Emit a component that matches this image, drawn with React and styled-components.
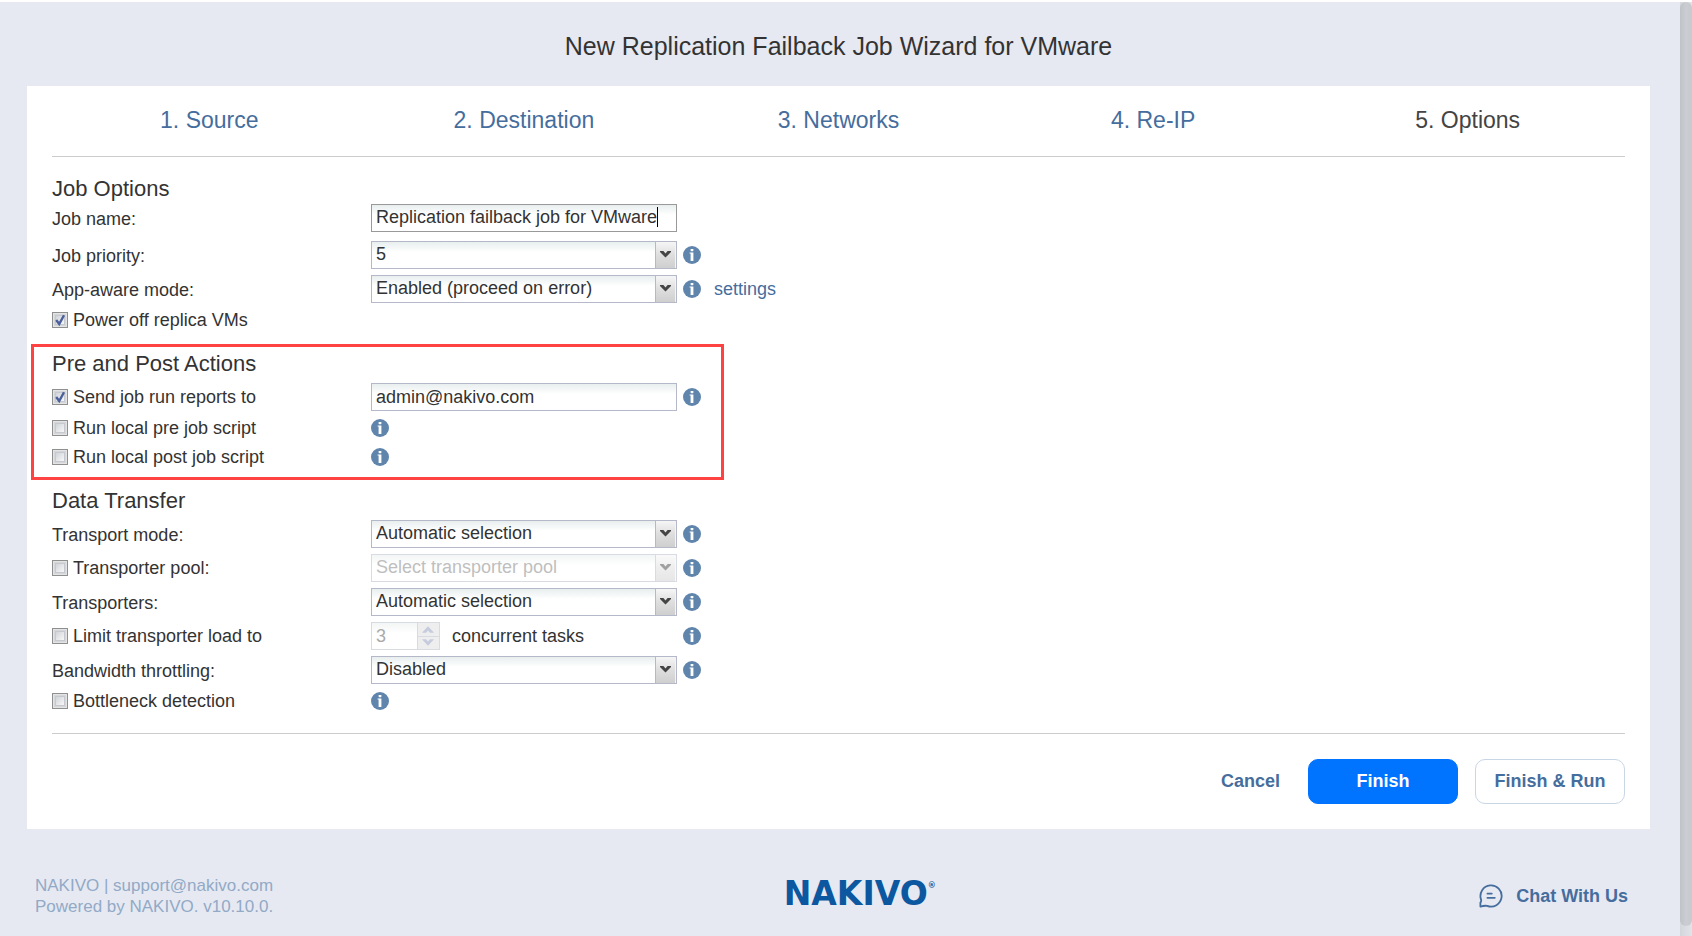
import { useState } from 'react';
import styled, { createGlobalStyle } from 'styled-components';

const GlobalStyle = createGlobalStyle`
  * {
    box-sizing: border-box;
  }
  body {
    margin: 0;
    color: #333;
    font-family: 'Liberation Sans', Arial, sans-serif;
    font-size: 18px;
    line-height: 22px;
    background: #e6e9f2;
  }
  button, input, select {
    font: inherit;
    color: inherit;
  }
`;

const Page = styled.div`
  display: flex;
  min-height: 100vh;
  border-top: 2px solid #fff;
`;

const Main = styled.main`
  flex: 1;
  display: flex;
  flex-direction: column;
`;

const ScrollTrack = styled.div`
  width: 12px;
  padding-bottom: 10px;
  display: flex;
  background: linear-gradient(to right, #d3d6db, #e0e3e8);
`;

const ScrollThumb = styled.div`
  flex: 1;
  border-radius: 6px;
  background: linear-gradient(to right, #bfc2c7, #cacdd2 50%, #c6c9ce);
`;

const Title = styled.h1`
  margin: 0;
  padding: 28px 30px 24px 27px;
  font-size: 25px;
  line-height: 32px;
  font-weight: normal;
  text-align: center;
`;

const Card = styled.div`
  margin: 0 30px 0 27px;
  padding: 0 25px 25px;
  background: #fff;
`;

const Steps = styled.nav`
  display: grid;
  grid-template-columns: repeat(5, 1fr);
  padding: 19px 0 21px;
  border-bottom: 1px solid #ccc;
  font-size: 23px;
  line-height: 30px;
  text-align: center;
`;

const Step = styled.a`
  color: ${(props) => (props.$current ? '#444' : '#456d9d')};
  text-decoration: none;
`;

const Section = styled.section`
  padding-top: ${(props) => props.$top}px;
`;

const Highlight = styled.section`
  width: 693px;
  margin: 9px 0 0 -21px;
  padding: 3px 18px 5px;
  border: 3px solid #ff4343;
`;

const Heading = styled.h2`
  margin: 0 0 ${(props) => (props.$tight ? 0 : 2)}px;
  font-size: 22px;
  line-height: ${(props) => (props.$tight ? 25 : 28)}px;
  font-weight: normal;
`;

const Row = styled.div`
  display: grid;
  grid-template-columns: 319px 306px auto;
  align-items: center;
  justify-content: start;
  height: ${(props) => (props.$compact ? 29 : 34)}px;
  padding-bottom: ${(props) => (props.$compact ? 2 : 0)}px;
  margin-bottom: ${(props) => (props.$spaced ? 3 : 0)}px;
`;

const Label = styled.label`
  padding-top: 2px;
`;

const CheckLabel = styled.label`
  display: flex;
  align-items: center;
  gap: 5px;
`;

const Checkbox = styled.input`
  appearance: none;
  flex: none;
  width: 16px;
  height: 16px;
  margin: 0;
  border: 1px solid #8e8f8f;
  box-shadow: inset 0 0 0 1px #e4e4e4, inset 0 0 0 2px #d4d6da,
    inset 0 0 0 3px #c6cad0;
  background: linear-gradient(135deg, #cfd3d8 20%, #f8f8f8 80%);
`;

const CheckBox = styled.span`
  position: relative;
  display: flex;
`;

const Tick = styled.svg`
  position: absolute;
  inset: 0;
  pointer-events: none;
`;

const Hint = styled.button`
  display: flex;
  width: 18px;
  height: 18px;
  padding: 0;
  border: 0;
  background: none;
`;

const Extras = styled.div`
  display: flex;
  align-items: center;
  padding-left: 6px;
  gap: 13px;
`;

const fieldLook = `
  height: 28px;
  border: 1px solid #b5b8c8;
  background: #fff linear-gradient(#e8eeee, #fff 10px);
`;

const TextBox = styled.input`
  ${fieldLook}
  width: 100%;
  padding: 0 4px;
  border-radius: 0;
  outline: none;
`;

const FocusedBox = styled.div`
  ${fieldLook}
  display: flex;
  align-items: center;
  padding: 0 4px 2px;
  border-color: #999;
`;

const GrowingInput = styled.input`
  field-sizing: content;
  height: 22px;
  padding: 0;
  border: 0;
  outline: none;
  background: none;
  caret-color: transparent;
`;

const Caret = styled.span`
  width: 1px;
  height: 20px;
  background: #000;
`;

const SelectBox = styled.div`
  position: relative;
  opacity: ${(props) => (props.$off ? 0.5 : 1)};
`;

const NativeSelect = styled.select`
  ${fieldLook}
  display: block;
  appearance: none;
  width: 100%;
  padding: 0 24px 2px 4px;
  border-radius: 0;
  opacity: 1;
  color: ${(props) => (props.disabled ? '#808080' : '#333')};
`;

const Trigger = styled.span`
  position: absolute;
  top: 1px;
  right: 1px;
  bottom: 1px;
  width: 21px;
  display: flex;
  align-items: center;
  justify-content: center;
  padding: 0 2px 1px 0;
  border-left: 1px solid #b5b8c8;
  border-radius: 0 3px 0 0;
  background: linear-gradient(#f6f6f6, #dedede 50%, #cfcfcf);
  box-shadow: inset -1px 1px 0 #f4f4f4;
  pointer-events: none;
`;

const SpinnerGroup = styled.div`
  display: flex;
  align-items: center;
  gap: 12px;
`;

const Spinner = styled.div`
  display: flex;
  width: 69px;
  opacity: 0.5;
`;

const SpinnerInput = styled.input`
  ${fieldLook}
  width: 47px;
  padding: 0 4px;
  border-radius: 0;
  color: #555;
`;

const SpinnerButtons = styled.div`
  display: grid;
  width: 22px;
  border: 1px solid #b5b8c8;
  border-left: 0;
`;

const SpinnerButton = styled.button`
  display: flex;
  align-items: center;
  justify-content: center;
  padding: 0 1px 0 0;
  border: 0;
  background: #dedede;

  & + & {
    border-top: 1px solid #b5b8c8;
  }
`;

const SettingsLink = styled.a`
  color: #456d9d;
  text-decoration: none;
`;

const Actions = styled.div`
  display: flex;
  justify-content: flex-end;
  gap: 17px;
  margin-top: 17px;
  padding-top: 25px;
  border-top: 1px solid #ccc;
`;

const Button = styled.button`
  width: 150px;
  height: 45px;
  padding: 0 0 2px;
  border: 1px solid ${(props) => (props.$primary ? '#0073ff' : '#c8d6e5')};
  border-radius: 10px;
  background: ${(props) => (props.$primary ? '#0073ff' : '#fff')};
  color: ${(props) => (props.$primary ? '#fff' : '#456d9d')};
  font-weight: bold;
`;

const CancelButton = styled.button`
  padding: 0 11px 2px;
  border: 0;
  background: none;
  color: #456d9d;
  font-weight: bold;
`;

const Footer = styled.footer`
  display: grid;
  grid-template-columns: 47% auto 1fr;
  align-items: center;
  padding: 46px 52px 14px 35px;
`;

const Version = styled.p`
  margin: 0;
  font-size: 17px;
  line-height: 21px;
  color: #92aac6;
`;

const Logo = styled.div`
  display: flex;
  align-items: flex-start;
  padding-bottom: 4px;
  color: #0b57a0;
  font-family: 'DejaVu Sans', sans-serif;
  font-size: 33px;
  line-height: 32px;
  font-weight: bold;
`;

const Registered = styled.span`
  font-size: 8px;
  line-height: 16px;
`;

const ChatLink = styled.a`
  justify-self: end;
  display: flex;
  align-items: center;
  gap: 13px;
  color: #456d9d;
  font-weight: bold;
  text-decoration: none;
`;

const steps = ['Source', 'Destination', 'Networks', 'Re-IP', 'Options'];

function Info({ topic }) {
  return (
    <Hint type="button" aria-label={`About ${topic}`}>
      <svg width="18" height="18" viewBox="0 0 18 18">
        <circle cx="9" cy="9" r="9" fill="#6085ad" />
        <rect x="7.6" y="3" width="2.8" height="2.2" rx="0.6" fill="#fff" />
        <path d="M6.6 6.4H10.4V15H7.6V7.6H6.6Z" fill="#fff" />
      </svg>
    </Hint>
  );
}

function Check({ label, defaultChecked = false }) {
  const [checked, setChecked] = useState(defaultChecked);

  return (
    <CheckLabel>
      <CheckBox>
        <Checkbox
          type="checkbox"
          checked={checked}
          onChange={(e) => setChecked(e.target.checked)}
        />
        {checked && (
          <Tick width="16" height="16" viewBox="0 0 16 16">
            <path
              d="M4.2 8L7.2 12L12 3.2"
              fill="none"
              stroke="#4a5f9c"
              strokeWidth="2.4"
            />
          </Tick>
        )}
      </CheckBox>
      {label}
    </CheckLabel>
  );
}

function Select({ id, value, disabled, label }) {
  return (
    <SelectBox $off={disabled}>
      <NativeSelect id={id} disabled={disabled} aria-label={label}>
        <option>{value}</option>
      </NativeSelect>
      <Trigger>
        <svg width="11" height="7" viewBox="0 0 11 7">
          <path d="M0 0H3.4L5.5 2.4L7.6 0H11V1L5.5 6.6L0 1Z" fill="#444" />
        </svg>
      </Trigger>
    </SelectBox>
  );
}

function App() {
  const [jobName, setJobName] = useState('Replication failback job for VMware');
  const [email, setEmail] = useState('admin@nakivo.com');

  return (
    <Page>
      <GlobalStyle />
      <Main>
        <Title>New Replication Failback Job Wizard for VMware</Title>
        <Card>
          <Steps>
            {steps.map((step, i) => (
              <Step key={step} href="#" $current={i === 4}>
                {i + 1}. {step}
              </Step>
            ))}
          </Steps>

          <Section $top={19}>
            <Heading $tight>Job Options</Heading>
            <Row $spaced>
              <Label htmlFor="job-name">Job name:</Label>
              <FocusedBox>
                <GrowingInput
                  id="job-name"
                  value={jobName}
                  onChange={(e) => setJobName(e.target.value)}
                />
                <Caret />
              </FocusedBox>
            </Row>
            <Row>
              <Label htmlFor="priority">Job priority:</Label>
              <Select id="priority" value="5" />
              <Extras>
                <Info topic="job priority" />
              </Extras>
            </Row>
            <Row>
              <Label htmlFor="app-aware">App-aware mode:</Label>
              <Select id="app-aware" value="Enabled (proceed on error)" />
              <Extras>
                <Info topic="app-aware mode" />
                <SettingsLink href="#">settings</SettingsLink>
              </Extras>
            </Row>
            <Row $compact>
              <Check label="Power off replica VMs" defaultChecked />
            </Row>
          </Section>

          <Highlight>
            <Heading>Pre and Post Actions</Heading>
            <Row>
              <Check label="Send job run reports to" defaultChecked />
              <TextBox
                aria-label="Report recipients"
                value={email}
                onChange={(e) => setEmail(e.target.value)}
              />
              <Extras>
                <Info topic="job run reports" />
              </Extras>
            </Row>
            <Row $compact>
              <Check label="Run local pre job script" />
              <Info topic="pre job script" />
            </Row>
            <Row $compact>
              <Check label="Run local post job script" />
              <Info topic="post job script" />
            </Row>
          </Highlight>

          <Section $top={7}>
            <Heading>Data Transfer</Heading>
            <Row>
              <Label htmlFor="transport-mode">Transport mode:</Label>
              <Select id="transport-mode" value="Automatic selection" />
              <Extras>
                <Info topic="transport mode" />
              </Extras>
            </Row>
            <Row>
              <Check label="Transporter pool:" />
              <Select
                label="Transporter pool"
                value="Select transporter pool"
                disabled
              />
              <Extras>
                <Info topic="transporter pool" />
              </Extras>
            </Row>
            <Row>
              <Label htmlFor="transporters">Transporters:</Label>
              <Select id="transporters" value="Automatic selection" />
              <Extras>
                <Info topic="transporters" />
              </Extras>
            </Row>
            <Row>
              <Check label="Limit transporter load to" />
              <SpinnerGroup>
                <Spinner>
                  <SpinnerInput
                    aria-label="Concurrent tasks"
                    defaultValue="3"
                    disabled
                  />
                  <SpinnerButtons>
                    <SpinnerButton type="button" aria-label="More" disabled>
                      <svg width="12" height="7" viewBox="0 0 12 7">
                        <path d="M0 6.8L6 0.2L12 6.8H8L6 4.6L4 6.8Z" fill="#8f9abf" />
                      </svg>
                    </SpinnerButton>
                    <SpinnerButton type="button" aria-label="Less" disabled>
                      <svg width="12" height="7" viewBox="0 0 12 7">
                        <path d="M0 0.2L6 6.8L12 0.2H8L6 2.4L4 0.2Z" fill="#8f9abf" />
                      </svg>
                    </SpinnerButton>
                  </SpinnerButtons>
                </Spinner>
                concurrent tasks
              </SpinnerGroup>
              <Extras>
                <Info topic="transporter load" />
              </Extras>
            </Row>
            <Row>
              <Label htmlFor="bandwidth">Bandwidth throttling:</Label>
              <Select id="bandwidth" value="Disabled" />
              <Extras>
                <Info topic="bandwidth throttling" />
              </Extras>
            </Row>
            <Row $compact>
              <Check label="Bottleneck detection" />
              <Info topic="bottleneck detection" />
            </Row>
          </Section>

          <Actions>
            <CancelButton type="button">Cancel</CancelButton>
            <Button type="button" $primary>
              Finish
            </Button>
            <Button type="button">Finish &amp; Run</Button>
          </Actions>
        </Card>

        <Footer>
          <Version>
            NAKIVO | support@nakivo.com
            <br />
            Powered by NAKIVO. v10.10.0.
          </Version>
          <Logo>
            NAKIVO<Registered>®</Registered>
          </Logo>
          <ChatLink href="#">
            <svg width="24" height="24" viewBox="0 0 24 24" fill="none" stroke="#456d9d" strokeWidth="1.8">
              <path d="M1.4 22.6V18.4Q2.6 17.6 2 15.4A10.6 10.6 0 1 1 8.2 21.9Q5.4 21.4 1.4 22.6Z" strokeLinejoin="round" />
              <path d="M8.4 9.6H12.8M8.4 13.8H15.8" strokeLinecap="round" />
            </svg>
            Chat With Us
          </ChatLink>
        </Footer>
      </Main>
      <ScrollTrack>
        <ScrollThumb />
      </ScrollTrack>
    </Page>
  );
}

export default App;
